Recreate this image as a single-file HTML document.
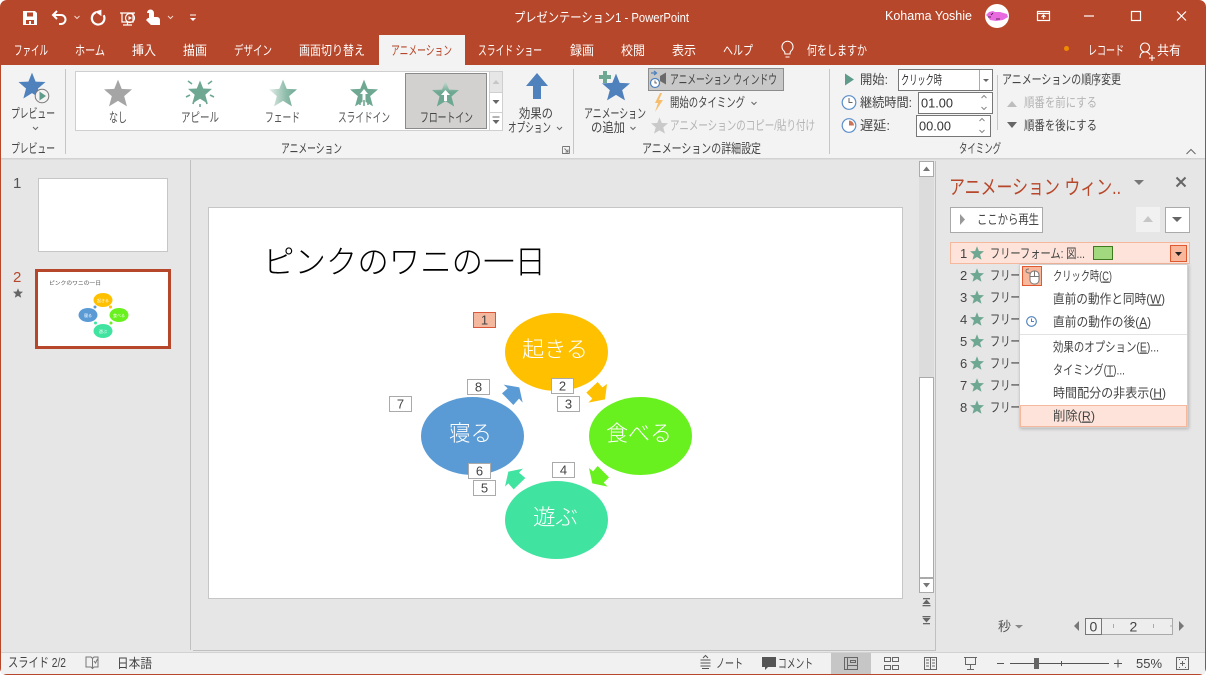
<!DOCTYPE html>
<html lang="ja"><head><meta charset="utf-8"><title>PowerPoint</title>
<style>
html,body{margin:0;padding:0;background:#fff;width:1206px;height:675px;overflow:hidden}
svg{display:block}
text{font-family:"Liberation Sans","Noto Sans CJK JP",sans-serif;font-size:13px;fill:#444}
.w{fill:#fff}
.m{font-size:13px;fill:#555}
.g{fill:#b4b4b4}
.gl{fill:#444}
</style></head><body>
<svg xmlns="http://www.w3.org/2000/svg" width="1206" height="675" viewBox="0 0 1206 675">
<defs>
<symbol id="s" viewBox="0 0 24 24"><polygon points="12,0.5 15.200,8.500 24,8.900 17.300,14.700 19.700,23.500 12,18.800 4.300,23.500 6.700,14.700 0,8.900 8.800,8.500"/></symbol>
<linearGradient id="fade" x1="0" x2="1" y1="0" y2="0"><stop offset="0" stop-color="#e4efea"/><stop offset=".6" stop-color="#8fbcab"/><stop offset="1" stop-color="#6ea892"/></linearGradient>
<linearGradient id="fl" x1="0" x2="0" y1="0" y2="1"><stop offset="0" stop-color="#cfe0d9"/><stop offset=".45" stop-color="#6ea892"/><stop offset="1" stop-color="#6ea892"/></linearGradient>
<filter id="sh" x="-5%" y="-5%" width="110%" height="110%"><feDropShadow dx="1" dy="1" stdDeviation="1.5" flood-color="#000" flood-opacity=".22"/></filter>
</defs>

<!-- window -->
<rect x="0" y="0" width="1206" height="675" rx="7" fill="#b7472a"/>
<rect x="1" y="65" width="1204" height="609" fill="#e6e6e6"/>

<!-- title bar icons -->
<path d="M23 11h12l2 2v12H23z" fill="#fff"/><rect x="27" y="12.500" width="6" height="4" fill="#b7472a"/><rect x="26" y="20" width="8" height="4" fill="#b7472a"/><rect x="29" y="21" width="2" height="3" fill="#fff"/>
<g fill="none" stroke="#fff" stroke-width="2">
<path d="M54 15h7a4.500 4.500 0 0 1 0 9h-2"/><path d="M57 11l-4 4 4 4"/>
<path d="M96 12.300A6.300 6.300 0 1 0 103.700 15.300" stroke-width="2.200"/>
<path d="M120 13h15M122 13v9h11v-9M127.500 22v3M123 25h9" stroke-width="1.200"/><circle cx="130" cy="18" r="4.500" stroke-width="1.200"/>
</g>
<polygon points="95,9.500 95,16 101.500,14" fill="#fff" transform="rotate(180 98.200 12.800)"/>
<polygon points="128.500,16 128.500,20 132,18" fill="#fff"/>
<path d="M147 13a3.500 3.500 0 0 1 7 0v4h3a3 3 0 0 1 3 3v5h-9l-5-5 2-2h1V13z" fill="#fff"/>
<g fill="none" stroke="#f1d5cc" stroke-width="1"><path d="M74.500 16l2.500 2.500 2.500-2.500M168 16l2.500 2.500 2.500-2.500"/></g>
<path d="M190 15h6" stroke="#fff"/><polygon points="190,18 196,18 193,21" fill="#fff"/>

<text class="w" x="514" y="22" textLength="175" lengthAdjust="spacingAndGlyphs">プレゼンテーション1  -  PowerPoint</text>
<text class="w" x="885" y="20" textLength="87" lengthAdjust="spacingAndGlyphs">Kohama Yoshie</text>
<ellipse cx="997" cy="16" rx="12" ry="12" fill="#fff"/>
<path d="M986 15l3-3 4-1 2 1 5 0 7 2 1 3-5 3-7 1-6-1-2-3z" fill="#e86be0"/><path d="M988 17h3M993 13l-2 2M996 19h4" stroke="#33122e" stroke-width=".8"/>
<g fill="none" stroke="#fff" stroke-width="1.200">
<rect x="1037.500" y="11.500" width="12" height="9"/><path d="M1037.500 13.500h12M1043.500 19v-4M1041.500 17l2-2 2 2"/>
<path d="M1084 16h10"/><rect x="1131.500" y="11.500" width="9" height="9"/><path d="M1177 11.500l9 9M1186 11.500l-9 9"/>
</g>

<!-- tabs -->
<rect x="379" y="35" width="86" height="31" fill="#f3f3f3"/>
<g class="tabs">
<text class="w" x="14" y="55" textLength="34" lengthAdjust="spacingAndGlyphs">ファイル</text>
<text class="w" x="75" y="55" textLength="30" lengthAdjust="spacingAndGlyphs">ホーム</text>
<text class="w" x="132" y="55" textLength="24" lengthAdjust="spacingAndGlyphs">挿入</text>
<text class="w" x="183" y="55" textLength="24" lengthAdjust="spacingAndGlyphs">描画</text>
<text class="w" x="234" y="55" textLength="38" lengthAdjust="spacingAndGlyphs">デザイン</text>
<text class="w" x="299" y="55" textLength="66" lengthAdjust="spacingAndGlyphs">画面切り替え</text>
<text style="fill:#b7472a" x="391" y="55" textLength="61" lengthAdjust="spacingAndGlyphs">アニメーション</text>
<text class="w" x="478" y="55" textLength="64" lengthAdjust="spacingAndGlyphs">スライド ショー</text>
<text class="w" x="570" y="55" textLength="24" lengthAdjust="spacingAndGlyphs">録画</text>
<text class="w" x="621" y="55" textLength="24" lengthAdjust="spacingAndGlyphs">校閲</text>
<text class="w" x="672" y="55" textLength="24" lengthAdjust="spacingAndGlyphs">表示</text>
<text class="w" x="723" y="55" textLength="30" lengthAdjust="spacingAndGlyphs">ヘルプ</text>
<text class="w" x="807" y="55" textLength="60" lengthAdjust="spacingAndGlyphs">何をしますか</text>
<text class="w" x="1088" y="55" textLength="36" lengthAdjust="spacingAndGlyphs">レコード</text>
<text class="w" x="1157" y="55" textLength="24" lengthAdjust="spacingAndGlyphs">共有</text>
</g>
<path d="M784 52a5.500 5.500 0 1 1 7 0c-1 1-1 2-1 3h-5c0-1 0-2-1-3zM785.500 58h4" transform="translate(0,-1)" fill="none" stroke="#fff" stroke-width="1.100"/>
<circle cx="1066.500" cy="48.500" r="2.500" fill="#f08c00"/>
<path d="M1140 58c0-4 2-6 5-6s4 1 5 3" fill="none" stroke="#fff" stroke-width="1.100"/><circle cx="1145" cy="47.500" r="4.500" fill="none" stroke="#fff" stroke-width="1.100"/><path d="M1149 58h6M1152 55v6" stroke="#fff" stroke-width="1.100"/>

<!-- ribbon -->
<rect x="1" y="65" width="1204" height="93" fill="#f3f3f3"/>
<rect x="379" y="65" width="86" height="1" fill="#f3f3f3"/>
<rect x="1" y="158" width="1204" height="1.500" fill="#d2d2d2"/>
<g fill="#c6c6c6"><rect x="65" y="69" width="1" height="85"/><rect x="573" y="69" width="1" height="85"/><rect x="829" y="69" width="1" height="85"/></g>

<!-- preview -->
<use href="#s" x="18" y="72" width="28" height="27" fill="#4f81bd"/>
<circle cx="42" cy="96" r="6.800" fill="#f3f3f3" stroke="#777" stroke-width="1"/><polygon points="39.500,91.500 39.500,100.500 46,96" fill="#5f9b8a"/>
<text x="11" y="118" textLength="44" lengthAdjust="spacingAndGlyphs">プレビュー</text>
<path d="M33 127l2.500 2.500 2.500-2.500" fill="none" stroke="#666"/>
<text x="11" y="153" textLength="44" lengthAdjust="spacingAndGlyphs">プレビュー</text>

<!-- gallery -->
<rect x="75.500" y="71.500" width="414" height="59" fill="#fff" stroke="#cfcfcf"/>
<rect x="405.500" y="73.500" width="81" height="55" fill="#d2d1cf" stroke="#8a8a8a"/>
<g fill="#fff" stroke="#cfcfcf"><rect x="489.500" y="71.500" width="13" height="21" fill="#e6e6e6"/><rect x="489.500" y="92.500" width="13" height="20"/><rect x="489.500" y="112.500" width="13" height="18"/></g>
<polygon points="492.500,84 499.500,84 496,80" fill="#c6c6c6"/><polygon points="492.500,100 499.500,100 496,104" fill="#666"/><path d="M492.500 117h7" stroke="#666"/><polygon points="492.500,120 499.500,120 496,124" fill="#666"/>
<use href="#s" x="104" y="79" width="28" height="28" fill="#a5a5a5"/>
<use href="#s" x="188" y="80" width="24" height="24" fill="#6ea892"/>
<g stroke="#6ea892" stroke-width="1.600"><path d="M188 81l4 3M212 81l-4 3M186 97l4-2M214 97l-4-2M193 104l1-3M207 104l-1-3M200 104v3"/></g>
<use href="#s" x="269" y="79" width="28" height="28" fill="url(#fade)"/>
<use href="#s" x="350" y="79" width="28" height="28" fill="#6ea892"/>
<path d="M364 89l-4 5h2.500v8h3v-8h2.500z" fill="#fff"/><path d="M360 97v8M364 100v6M368 97v8" stroke="#6ea892" stroke-width="1.600"/>
<use href="#s" x="432" y="80" width="27" height="27" fill="url(#fl)"/>
<path d="M445.500 90l-4.500 5h3v6h3v-6h3z" fill="#fff"/>
<text class="m" x="109" y="122" textLength="18" lengthAdjust="spacingAndGlyphs">なし</text>
<text class="m" x="181" y="122" textLength="38" lengthAdjust="spacingAndGlyphs">アピール</text>
<text class="m" x="265" y="122" textLength="35" lengthAdjust="spacingAndGlyphs">フェード</text>
<text class="m" x="338" y="122" textLength="52" lengthAdjust="spacingAndGlyphs">スライドイン</text>
<text x="420" y="122" textLength="53" lengthAdjust="spacingAndGlyphs">フロートイン</text>
<!-- effect options -->
<path d="M537 73l-11 13h7v13h8V86h7z" fill="#4f81bd"/>
<text x="519" y="118" textLength="34" lengthAdjust="spacingAndGlyphs">効果の</text>
<text x="508" y="132" textLength="43" lengthAdjust="spacingAndGlyphs">オプション</text>
<path d="M557 127l2.500 2.500 2.500-2.500" fill="none" stroke="#666"/>
<text x="281" y="153" textLength="61" lengthAdjust="spacingAndGlyphs">アニメーション</text>
<path d="M562.500 146.500h7v7M562.500 146.500v7h7M564.500 148.500l3.500 3.500M568 149.500v2.500h-2.500" fill="none" stroke="#777" stroke-width=".9"/>

<!-- advanced -->
<use href="#s" x="602" y="73" width="28" height="28" fill="#4f81bd"/>
<path d="M603 71h4v4h4v4h-4v4h-4v-4h-4v-4h4z" fill="#6ea892"/>
<text x="584" y="118" textLength="62" lengthAdjust="spacingAndGlyphs">アニメーション</text>
<text x="591" y="132" textLength="34" lengthAdjust="spacingAndGlyphs">の追加</text>
<path d="M630.500 127l2.500 2.500 2.500-2.500" fill="none" stroke="#666"/>
<rect x="648.500" y="68.500" width="135" height="22" fill="#c8c8c8" stroke="#8c8c8c"/>
<path d="M651 73h5M654 71l2.500 2-2.500 2" stroke="#4f81bd" fill="none" stroke-width="1.300"/>
<circle cx="655" cy="83" r="4.500" fill="#fff" stroke="#4f81bd" stroke-width="1.200"/><path d="M655 80.500v2.500h2" stroke="#444" fill="none" stroke-width=".8"/>
<polygon points="660,76 666,72.500 666,84.500 660,81" fill="#6a6a6a"/>
<text x="670" y="84" textLength="107" lengthAdjust="spacingAndGlyphs">アニメーション ウィンドウ</text>
<polygon points="660,93 655,103 658,103 655,112 663,100 659,100 662,93" fill="#f5be6e"/>
<text x="670" y="107" textLength="75" lengthAdjust="spacingAndGlyphs">開始のタイミング</text>
<path d="M751.500 102l2.500 2.500 2.500-2.500" fill="none" stroke="#666"/>
<use href="#s" x="651" y="117" width="17" height="17" fill="#c9c9c9"/>
<text class="g" x="670" y="130" textLength="145" lengthAdjust="spacingAndGlyphs">アニメーションのコピー/貼り付け</text>
<text x="642" y="153" textLength="119" lengthAdjust="spacingAndGlyphs">アニメーションの詳細設定</text>

<!-- timing -->
<polygon points="845,73.500 845,85.500 854,79.500" fill="#5f9b8a"/>
<text x="860" y="84" textLength="28" lengthAdjust="spacingAndGlyphs">開始:</text>
<rect x="898.500" y="69.500" width="94" height="21" fill="#fff" stroke="#777"/><path d="M979.500 70v20" stroke="#aaa"/><polygon points="983,79 989,79 986,82" fill="#666"/>
<text style="fill:#333" x="901" y="84.500" textLength="41" lengthAdjust="spacingAndGlyphs">クリック時</text>
<circle cx="849" cy="102.500" r="6.800" fill="#fff" stroke="#5b8fc9" stroke-width="1.200"/><path d="M849 98v4.500h3.500" stroke="#666" fill="none"/>
<text x="860" y="107" textLength="52" lengthAdjust="spacingAndGlyphs">継続時間:</text>
<rect x="918.500" y="92.500" width="74" height="21" fill="#fff" stroke="#777"/>
<text style="fill:#333;font-size:13px" x="921" y="107.500" textLength="32" lengthAdjust="spacingAndGlyphs">01.00</text>
<path d="M981.500 98l2.500-2.500 2.500 2.500M981.500 107l2.500 2.500 2.500-2.500" fill="none" stroke="#888"/>
<circle cx="849" cy="125.500" r="6.800" fill="#fff" stroke="#5b8fc9" stroke-width="1.200"/><path d="M849 120.500a5 5 0 0 1 5 5h-5z" fill="#c8735a"/>
<text x="860" y="130" textLength="30" lengthAdjust="spacingAndGlyphs">遅延:</text>
<rect x="916.500" y="115.500" width="74" height="21" fill="#fff" stroke="#777"/>
<text style="fill:#333;font-size:13px" x="919" y="130.500" textLength="32" lengthAdjust="spacingAndGlyphs">00.00</text>
<path d="M979.500 121l2.500-2.500 2.500 2.500M979.500 130l2.500 2.500 2.500-2.500" fill="none" stroke="#888"/>
<path d="M997.500 75v55" stroke="#c6c6c6"/>
<text x="1002" y="84" textLength="119" lengthAdjust="spacingAndGlyphs">アニメーションの順序変更</text>
<polygon points="1007,107 1017,107 1012,101" fill="#bdbdbd"/>
<text class="g" x="1024" y="107" textLength="73" lengthAdjust="spacingAndGlyphs">順番を前にする</text>
<polygon points="1007,122 1017,122 1012,128" fill="#666"/>
<text x="1024" y="130" textLength="73" lengthAdjust="spacingAndGlyphs">順番を後にする</text>
<text x="959" y="153" textLength="42" lengthAdjust="spacingAndGlyphs">タイミング</text>
<path d="M1186.500 154l4.500-4.500 4.500 4.500" fill="none" stroke="#666"/>

<!-- left pane -->
<path d="M190.500 160v490" stroke="#c0c0c0"/>
<text style="font-size:15px;fill:#555" x="13" y="188">1</text>
<rect x="38.500" y="178.500" width="129" height="73" fill="#fff" stroke="#c6c6c6"/>
<text style="font-size:15px;fill:#b7472a" x="13" y="282">2</text>
<use href="#s" x="13" y="288" width="10" height="10" fill="#666"/>
<rect x="36.500" y="270.500" width="133" height="77" fill="#fff" stroke="#b7472a" stroke-width="3"/>
<text style="font-size:5.500px;fill:#555" x="49" y="285" textLength="52" lengthAdjust="spacingAndGlyphs">ピンクのワニの一日</text>
<ellipse cx="103" cy="300" rx="9.500" ry="7" fill="#ffc000"/><ellipse cx="119" cy="315" rx="9.500" ry="7" fill="#68f01f"/><ellipse cx="103" cy="331" rx="9.500" ry="7" fill="#41e3a0"/><ellipse cx="88" cy="315" rx="9.500" ry="7" fill="#5b9bd5"/>
<circle cx="110.500" cy="307" r="1.500" fill="#ffc000"/><circle cx="111" cy="323" r="1.500" fill="#68f01f"/><circle cx="95.500" cy="323" r="1.500" fill="#41e3a0"/><circle cx="95" cy="307" r="1.500" fill="#5b9bd5"/>
<g style="font-size:4px"><text class="w" style="font-size:4px" x="97" y="302">起きる</text><text class="w" style="font-size:4px" x="113" y="317">食べる</text><text class="w" style="font-size:4px" x="99" y="333">遊ぶ</text><text class="w" style="font-size:4px" x="84" y="317">寝る</text></g>

<!-- slide -->
<rect x="208.500" y="207.500" width="694" height="391" fill="#fff" stroke="#c6c6c6"/>
<text style="font-size:32px;fill:#000;font-weight:300" x="263" y="273" textLength="283" lengthAdjust="spacingAndGlyphs">ピンクのワニの一日</text>
<ellipse cx="556.500" cy="352" rx="51.500" ry="39" fill="#ffc000"/>
<ellipse cx="640.500" cy="436" rx="51.500" ry="39" fill="#68f01f"/>
<ellipse cx="556.500" cy="520" rx="51.500" ry="39" fill="#41e3a0"/>
<ellipse cx="472.500" cy="436" rx="51.500" ry="39" fill="#5b9bd5"/>
<g transform="translate(380,300) scale(.33333)">
<polygon points="653,246 667,262 681,252 675,298 625,308 637,296 619,278" fill="#ffc000"/>
<polygon points="653,498 687,532 671,548 683,560 637,550 627,504 639,514" fill="#68f01f"/>
<polygon points="429,506 417,518 436,534 401,568 385,550 375,560 385,515" fill="#41e3a0"/>
<polygon points="371,254 418,262 428,308 417,296 400,315 366,280 383,265" fill="#5b9bd5"/>
</g>
<g style="font-weight:300">
<text class="w" style="font-size:22px" x="522" y="357" textLength="66" lengthAdjust="spacingAndGlyphs">起きる</text>
<text class="w" style="font-size:22px" x="606" y="441" textLength="66" lengthAdjust="spacingAndGlyphs">食べる</text>
<text class="w" style="font-size:22px" x="533" y="525" textLength="45" lengthAdjust="spacingAndGlyphs">遊ぶ</text>
<text class="w" style="font-size:22px" x="449" y="441" textLength="43" lengthAdjust="spacingAndGlyphs">寝る</text>
</g>
<g fill="#fff" stroke="#aaa">
<rect x="473.500" y="312.500" width="22" height="15" fill="#f4b89f" stroke="#d9573a"/>
<rect x="551.500" y="378.500" width="22" height="15"/><rect x="557.500" y="396.500" width="22" height="15"/>
<rect x="552.500" y="462.500" width="22" height="15"/><rect x="473.500" y="480.500" width="22" height="15"/>
<rect x="468.500" y="463.500" width="22" height="15"/><rect x="389.500" y="396.500" width="22" height="15"/><rect x="467.500" y="379.500" width="22" height="15"/>
</g>
<g text-anchor="middle">
<text x="484.500" y="324.500">1</text><text x="562.500" y="390.500">2</text><text x="568.500" y="408.500">3</text><text x="563.500" y="474.500">4</text>
<text x="484.500" y="492.500">5</text><text x="479.500" y="475.500">6</text><text x="400.500" y="408.500">7</text><text x="478.500" y="391.500">8</text>
</g>

<!-- scrollbar -->
<rect x="919" y="176" width="15" height="402" fill="#dcdcdc"/>
<rect x="919.500" y="161.500" width="14" height="15" fill="#fff" stroke="#aaa"/>
<polygon points="923,171 930,171 926.500,166.500" fill="#777"/>
<rect x="919.500" y="377.500" width="14" height="200" fill="#fff" stroke="#aaa"/>
<rect x="919.500" y="578.500" width="14" height="14" fill="#fff" stroke="#aaa"/>
<polygon points="923,583 930,583 926.500,587.500" fill="#777"/>
<g fill="#666">
<rect x="923" y="598" width="7" height="1.300"/><polygon points="922.500,604 930.500,604 926.500,599.500"/><rect x="922.500" y="605" width="8" height="1.300"/>
<rect x="922.500" y="616" width="8" height="1.300"/><polygon points="922.500,618 930.500,618 926.500,622.500"/><rect x="923" y="623" width="7" height="1.300"/>
</g>
<path d="M935.500 161v489.500H193" fill="none" stroke="#c0c0c0"/>

<!-- animation pane -->
<text style="font-size:20px;fill:#b7472a" x="949" y="194" textLength="172" lengthAdjust="spacingAndGlyphs">アニメーション ウィン..</text>
<polygon points="1134,180 1144,180 1139,185" fill="#777"/>
<path d="M1176.500 177.500l9 9M1185.500 177.500l-9 9" stroke="#666" stroke-width="2"/>
<rect x="950.500" y="207.500" width="92" height="25" fill="#fff" stroke="#aaa"/>
<polygon points="960,214 960,225 965,219.500" fill="#999"/>
<text x="977" y="224" textLength="62" lengthAdjust="spacingAndGlyphs">ここから再生</text>
<rect x="1136" y="207" width="24" height="25" fill="#f1f1f1"/>
<polygon points="1143,222 1153,222 1148,216" fill="#c6c6c6"/>
<rect x="1165.500" y="207.500" width="24" height="25" fill="#fff" stroke="#aaa"/>
<polygon points="1172,217 1182,217 1177,222" fill="#666"/>

<rect x="950.500" y="242.500" width="239" height="21" fill="#fde3d9" stroke="#f5b89d"/>
<g>
<text x="960" y="258">1</text><text x="960" y="280">2</text><text x="960" y="302">3</text><text x="960" y="324">4</text>
<text x="960" y="346">5</text><text x="960" y="368">6</text><text x="960" y="390">7</text><text x="960" y="412">8</text>
</g>
<g fill="#6ea892">
<use href="#s" x="970" y="246" width="14" height="14"/><use href="#s" x="970" y="268" width="14" height="14"/><use href="#s" x="970" y="290" width="14" height="14"/><use href="#s" x="970" y="312" width="14" height="14"/>
<use href="#s" x="970" y="334" width="14" height="14"/><use href="#s" x="970" y="356" width="14" height="14"/><use href="#s" x="970" y="378" width="14" height="14"/><use href="#s" x="970" y="400" width="14" height="14"/>
</g>
<g>
<text x="990" y="258" textLength="95" lengthAdjust="spacingAndGlyphs">フリーフォーム: 図...</text>
<text x="990" y="280" textLength="95" lengthAdjust="spacingAndGlyphs">フリーフォーム: 図...</text>
<text x="990" y="302" textLength="95" lengthAdjust="spacingAndGlyphs">フリーフォーム: 図...</text>
<text x="990" y="324" textLength="95" lengthAdjust="spacingAndGlyphs">フリーフォーム: 図...</text>
<text x="990" y="346" textLength="95" lengthAdjust="spacingAndGlyphs">フリーフォーム: 図...</text>
<text x="990" y="368" textLength="95" lengthAdjust="spacingAndGlyphs">フリーフォーム: 図...</text>
<text x="990" y="390" textLength="95" lengthAdjust="spacingAndGlyphs">フリーフォーム: 図...</text>
<text x="990" y="412" textLength="95" lengthAdjust="spacingAndGlyphs">フリーフォーム: 図...</text>
</g>
<rect x="1093.500" y="246.500" width="19" height="13" fill="#a2d97f" stroke="#3d7a20"/>
<rect x="1170.500" y="245.500" width="16" height="16" fill="#f9b79b" stroke="#e0582f"/>
<polygon points="1175,252 1182,252 1178.500,256" fill="#222"/>

<!-- context menu -->
<rect x="1019.500" y="264.500" width="168" height="163" fill="#fff" stroke="#d0d0d0" filter="url(#sh)"/>
<rect x="1022.500" y="266.500" width="19" height="19" fill="#f9b79b" stroke="#e0582f"/>
<rect x="1030" y="271" width="9" height="13" rx="4" fill="#fff" stroke="#777"/><path d="M1030 276.500h9M1034.500 271v5.500M1030 273c-3 0-4-1-4-2s0-2 3-2" fill="none" stroke="#777"/>
<circle cx="1031.500" cy="321.500" r="4.800" fill="#fff" stroke="#4f81bd" stroke-width="1.100"/><path d="M1031.500 318.500v3h2.500" fill="none" stroke="#4f81bd"/>
<path d="M1020 334.500h167" stroke="#e2e2e2"/>
<rect x="1020.500" y="405.500" width="166" height="21" fill="#fde3d9" stroke="#f5b89d"/>
<g>
<text x="1053" y="280.500" textLength="59" lengthAdjust="spacingAndGlyphs">クリック時(<tspan style="text-decoration:underline">C</tspan>)</text>
<text x="1053" y="303.500" textLength="112" lengthAdjust="spacingAndGlyphs">直前の動作と同時(<tspan style="text-decoration:underline">W</tspan>)</text>
<text x="1053" y="326.500" textLength="98" lengthAdjust="spacingAndGlyphs">直前の動作の後(<tspan style="text-decoration:underline">A</tspan>)</text>
<text x="1053" y="351.500" textLength="106" lengthAdjust="spacingAndGlyphs">効果のオプション(<tspan style="text-decoration:underline">E</tspan>)...</text>
<text x="1053" y="374.500" textLength="72" lengthAdjust="spacingAndGlyphs">タイミング(<tspan style="text-decoration:underline">T</tspan>)...</text>
<text x="1053" y="397.500" textLength="113" lengthAdjust="spacingAndGlyphs">時間配分の非表示(<tspan style="text-decoration:underline">H</tspan>)</text>
<text x="1053" y="420.500" textLength="42" lengthAdjust="spacingAndGlyphs">削除(<tspan style="text-decoration:underline">R</tspan>)</text>
</g>

<!-- timeline -->
<text class="m" x="998" y="631" textLength="13" lengthAdjust="spacingAndGlyphs">秒</text>
<polygon points="1015,625 1023,625 1019,628.500" fill="#888"/>
<polygon points="1079,621 1079,631 1074,626" fill="#777"/>
<rect x="1085.500" y="618.500" width="87" height="16" fill="#ededed" stroke="#aaa"/>
<rect x="1085.500" y="618.500" width="16" height="16" fill="#f2f2f2" stroke="#777"/>
<text style="font-size:14px" x="1089.500" y="631.500">0</text><text style="font-size:14px" x="1129.500" y="631.500">2</text>
<path d="M1113.500 624v4M1153.500 624v4M1171 625v2" stroke="#aaa"/>
<polygon points="1179,621 1179,631 1184,626" fill="#777"/>

<!-- status bar -->
<rect x="1" y="652" width="1204" height="22" fill="#f1f1f1"/>
<rect x="1" y="652" width="1204" height="1" fill="#d2d2d2"/>
<text x="8" y="667" textLength="58" lengthAdjust="spacingAndGlyphs">スライド 2/2</text>
<path d="M86 657h5l1.500 1.500 1.500-1.500h4v10h-4l-1.500 1.500-1.500-1.500h-5zM92.500 658.500v9M94 661l1.500 2 2-4" fill="none" stroke="#777"/>
<text x="117" y="668" textLength="35" lengthAdjust="spacingAndGlyphs">日本語</text>
<path d="M700.500 660h10M700.500 663h10M700.500 666h10M702 668.500h7M703 658l2.500-2.500 2.500 2.500" fill="none" stroke="#555"/>
<text x="716" y="668" textLength="27" lengthAdjust="spacingAndGlyphs">ノート</text>
<path d="M762 657h14v10h-8l-3 3v-3h-3z" fill="#555"/>
<text x="778" y="668" textLength="35" lengthAdjust="spacingAndGlyphs">コメント</text>
<rect x="831" y="653" width="40" height="21" fill="#c6c6c6"/>
<g fill="none" stroke="#666">
<path d="M844.500 657.500h13v12h-13zM847.500 657.500v12M847.500 665.500h10M850.500 660.500h5v2h-5z"/>
<path d="M884.500 657.500h6v4h-6zM892.500 657.500h6v4h-6zM884.500 665.500h6v4h-6zM892.500 665.500h6v4h-6z"/>
<path d="M924.500 657.500h12v12h-12zM930.500 657.500v12M926 660h3M926 663h3M926 666h3M932 660h3M932 663h3M932 666h3"/>
<path d="M964 657.500h13M965.500 657.500v7h10v-7M970.500 664.500v5M967 669.500h7"/>
<path d="M1176.500 657.500h12v12h-12zM1180 663.500h5M1182.500 661v5M1179 659.500h1M1185 659.500h1M1179 667.500h1M1185 667.500h1"/>
</g>
<path d="M997 663.500h7M1010 663.500h99M1061.500 661v5M1114 663.500h8M1118 659.500v8" stroke="#555" fill="none"/>
<rect x="1034" y="658" width="5" height="11" fill="#666"/>
<text x="1136" y="668" textLength="26" lengthAdjust="spacingAndGlyphs">55%</text>
</svg>
</body></html>
